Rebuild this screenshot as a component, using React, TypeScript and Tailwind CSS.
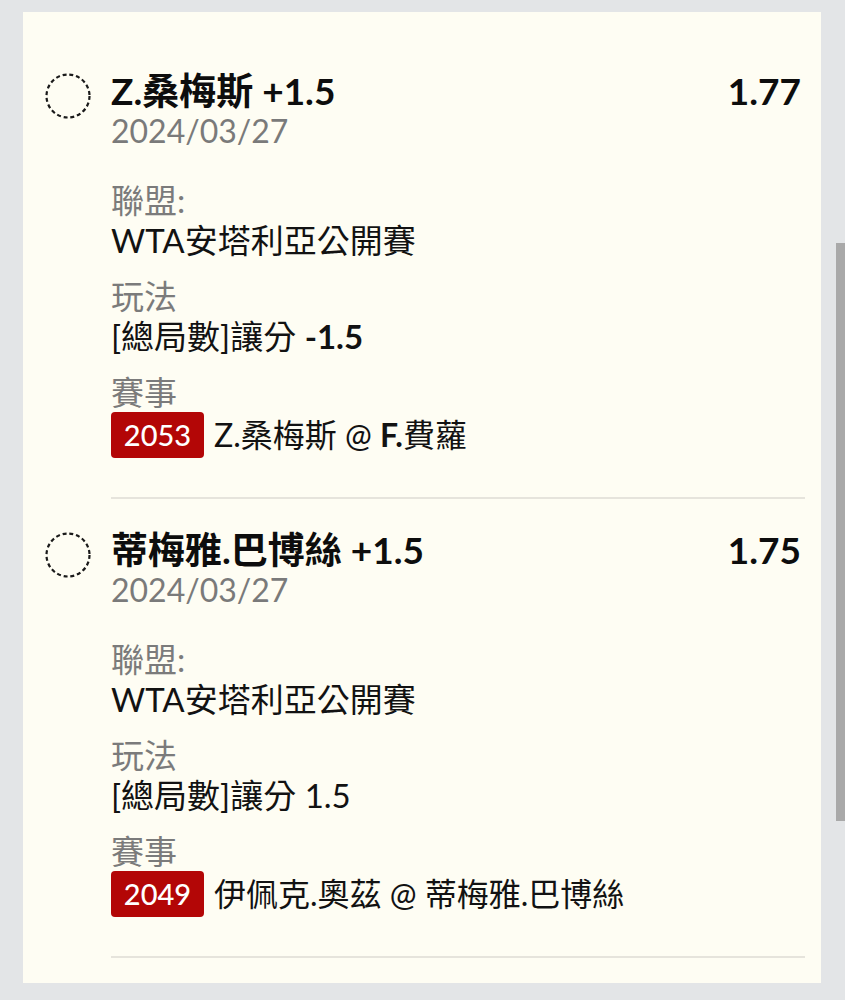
import React from "react";

type Bet = {
  selection: React.ReactNode;
  odds: string;
  date: string;
  league: string;
  play: React.ReactNode;
  matchNo: string;
  match: React.ReactNode;
};

const BETS: Bet[] = [
  {
    selection: "Z.桑梅斯 +1.5",
    odds: "1.77",
    date: "2024/03/27",
    league: "WTA安塔利亞公開賽",
    play: (
      <>
        [總局數]讓分 <span className="font-bold">-1.5</span>
      </>
    ),
    matchNo: "2053",
    match: (
      <>
        Z.桑梅斯 @ <span className="font-bold">F.</span>費蘿
      </>
    ),
  },
  {
    selection: "蒂梅雅.巴博絲 +1.5",
    odds: "1.75",
    date: "2024/03/27",
    league: "WTA安塔利亞公開賽",
    play: "[總局數]讓分 1.5",
    matchNo: "2049",
    match: "伊佩克.奧茲 @ 蒂梅雅.巴博絲",
  },
];

function DashedCircle() {
  return (
    <svg width="46" height="46" viewBox="0 0 46 46" className="mt-[3px] shrink-0">
      <circle
        cx="23"
        cy="23"
        r="21.5"
        fill="none"
        stroke="#1a1a1a"
        strokeWidth="2.2"
        strokeDasharray="4 2.8"
      />
    </svg>
  );
}

function BetRow({ bet }: { bet: Bet }) {
  return (
    <div className="flex gap-[20px] pt-[30px]">
      <DashedCircle />
      <div className="flex-1 border-b-2 border-[#e6e4dc] pb-[39px]">
        <div className="flex items-center justify-between pr-[4px] text-[37px] font-bold leading-[42px] text-[#0d0d0d]">
          <span>{bet.selection}</span>
          <span>{bet.odds}</span>
        </div>
        <p className="text-[32px] leading-[38px] text-[#7a7a7a]">{bet.date}</p>

        <div className="mt-[30px] flex flex-col gap-[16px] text-[33px] leading-[40px]">
          <div>
            <p className="text-[#7b7b7b]">聯盟:</p>
            <p className="text-[#121212]">{bet.league}</p>
          </div>
          <div>
            <p className="text-[#7b7b7b]">玩法</p>
            <p className="text-[#121212]">{bet.play}</p>
          </div>
          <div>
            <p className="text-[#7b7b7b]">賽事</p>
            <div className="flex h-[46px] items-center gap-[10px] text-[#121212]">
              <span className="flex h-[46px] w-[93px] shrink-0 items-center justify-center rounded-[4px] bg-[#b30606] text-[29px] font-medium text-white">
                {bet.matchNo}
              </span>
              <span className="text-[32px]">{bet.match}</span>
            </div>
          </div>
        </div>
      </div>
    </div>
  );
}

export default function App() {
  return (
    <div
      className="relative h-[1000px] w-[845px] overflow-hidden bg-[#e3e5e7] pl-[23px] pt-[12px]"
      style={{ fontFamily: "Lato, 'Noto Sans CJK TC', sans-serif" }}
    >
      <div className="h-[971px] w-[798px] bg-[#fefdf3] pl-[22px] pr-[16px] pt-[28px]">
        {BETS.map((bet) => (
          <BetRow key={bet.matchNo} bet={bet} />
        ))}
      </div>
      <div className="absolute right-0 top-[243px] h-[578px] w-[9px] bg-[#a9a9a9]" />
    </div>
  );
}
